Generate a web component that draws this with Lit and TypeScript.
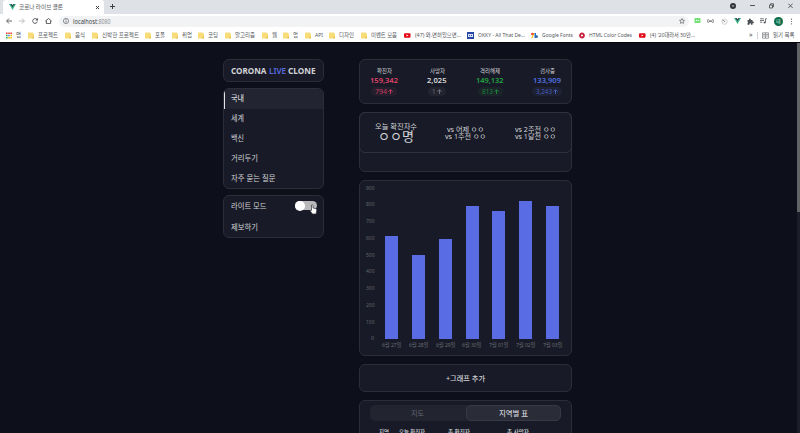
import { LitElement, html, css, svg } from "lit";
import { customElement, property } from "lit/decorators.js";
import { styleMap } from "lit/directives/style-map.js";

const vue = html`<svg width="7" height="6" viewBox="0 0 14 12"><path d="M0 0h5.400l1.600 2.700L8.600 0H14L7 12z" fill="#41b883"/><path d="M2.800 0h2.600L7 2.700 8.600 0h2.600L7 7.200z" fill="#35495e"/></svg>`;
const folder = html`<svg width="6" height="7" viewBox="0 0 6 7"><path d="M0 .5h5v1h1V6.500H0z" fill="#f9dc7a"/><path d="M4.500 4.500H6v2H4.500z" fill="#e9bd50"/></svg>`;
const youtube = html`<svg width="7" height="7" viewBox="0 0 7 7"><rect y="1.200" width="6.500" height="4.600" rx="1" fill="#e30613"/><path d="M2.500 2.400l2 1.100-2 1.100z" fill="#fff"/></svg>`;
const apps = html`<svg width="6" height="7" viewBox="0 0 6 7"><path d="M0 .5h1.600v1.600H0zM2.200 .5h1.600v1.600H2.200zM4.400 .5H6v1.600H4.400z" fill="#ea4335"/><path d="M0 2.700h1.600v1.600H0zM0 4.900h1.600v1.600H0z" fill="#34a853"/><path d="M2.200 2.700h1.600v1.600H2.200z" fill="#4285f4"/><path d="M4.400 2.700H6v1.600H4.400zM2.200 4.900h1.600v1.600H2.200zM4.400 4.900H6v1.600H4.400z" fill="#fbbc05"/></svg>`;
const okky = html`<svg width="7" height="7" viewBox="0 0 7 7"><rect width="7" height="7" fill="#2647a5"/><path d="M1 2h5v3H1z" fill="#dce3f5"/><path d="M2 3h1v1H2zM4 3h1v1H4z" fill="#2647a5"/></svg>`;
const gfonts = html`<svg width="7" height="7" viewBox="0 0 7 7"><path d="M0 1h4L1.500 6H0L2 3z" fill="#fbbc04"/><path d="M3.500 1H5v5H3.500z" fill="#1a73e8"/><circle cx="5.600" cy="4.600" r="1.400" fill="#34679a"/><circle cx="1.300" cy="2" r="1.200" fill="#ea4335"/></svg>`;
const colors = html`<svg width="6" height="7" viewBox="0 0 6 7"><circle cx="3" cy="3.500" r="2" fill="none" stroke="#c91e3a" stroke-width="1.800"/></svg>`;

const bookmarks = [
  { icon: apps, label: "앱", width: 22, text: 5 },
  { icon: folder, label: "프로젝트", width: 37, text: 20 },
  { icon: folder, label: "음식", width: 27, text: 10 },
  { icon: folder, label: "신박한 프로젝트", width: 53, text: 37 },
  { icon: folder, label: "포폴", width: 27, text: 10 },
  { icon: folder, label: "취업", width: 26, text: 10 },
  { icon: folder, label: "코딩", width: 27, text: 10 },
  { icon: folder, label: "알고리즘", width: 37, text: 20 },
  { icon: folder, label: "웹", width: 21, text: 5 },
  { icon: folder, label: "업", width: 22, text: 5 },
  { icon: folder, label: "API", width: 24, text: 8 },
  { icon: folder, label: "디자인", width: 32, text: 15 },
  { icon: folder, label: "이벤트 모음", width: 43, text: 26 },
  { icon: youtube, label: "(47) 와.면허있으면...", width: 63, text: 46 },
  { icon: okky, label: "OKKY - All That De...", width: 64, text: 47 },
  { icon: gfonts, label: "Google Fonts", width: 48, text: 31 },
  { icon: colors, label: "HTML Color Codes", width: 60, text: 43 },
  { icon: youtube, label: "(4) '20대라서 50만...", width: 60, text: 45 },
];

const stats = [
  { name: "확진자", total: "159,342", delta: "794", tone: "red" },
  { name: "사망자", total: "2,025", delta: "1", tone: "grey" },
  { name: "격리해제", total: "149,132", delta: "813", tone: "green" },
  { name: "검사중", total: "133,909", delta: "3,243", tone: "blue" },
];

const days = [
  { label: "6월 27일", value: 612 },
  { label: "6월 28일", value: 501 },
  { label: "6월 29일", value: 595 },
  { label: "6월 30일", value: 792 },
  { label: "7월 01일", value: 761 },
  { label: "7월 02일", value: 825 },
  { label: "7월 03일", value: 793 },
];

/** Single line of text set to an exact width. */
@customElement("fit-text")
class FitText extends LitElement {
  static styles = css`
    :host { display: inline-block; line-height: 0; flex: none; }
    svg { display: block; overflow: visible; }
    text { fill: currentColor; }
  `;
  @property() text = "";
  @property({ type: Number }) width = 10;
  @property({ type: Number }) size = 6;
  render() {
    const h = Math.ceil(this.size * 1.3);
    return html`<svg width=${this.width} height=${h}>
      ${svg`<text x="0" y=${h / 2 + this.size * 0.36} font-size=${this.size} textLength=${this.width} lengthAdjust="spacingAndGlyphs">${this.text}</text>`}
    </svg>`;
  }
}

@customElement("browser-chrome")
class BrowserChrome extends LitElement {
  static styles = css`
    :host { display: block; height: 43px; background: #fff; color: #55585c; }
    svg { display: block; flex: none; }
    .strip { height: 14px; background: #dee1e6; display: flex; align-items: stretch; }
    .tab { margin-left: 3px; width: 91px; padding: 0 4px 0 6px; background: #fff; border-radius: 3px 3px 0 0; display: flex; align-items: center; gap: 3px; }
    .close { margin-left: auto; }
    .plus { margin: 3px 0 0 5px; }
    .window { margin: 1.500px 7px 0 auto; display: flex; align-items: center; gap: 14px; height: 9px; }
    .bar { height: 14px; display: flex; align-items: center; padding: 0 0 0 6px; }
    .nav { display: flex; gap: 7px; width: 52px; }
    .url { width: 630px; height: 11px; border-radius: 6px; background: #f1f3f4; display: flex; align-items: center; padding: 0 4px; gap: 3.500px; box-sizing: border-box; margin-left: 1px; }
    .url .star { margin-left: auto; }
    .dim { color: #8c9094; }
    .host { display: flex; gap: .6px; color: #3c4043; }
    .ext { display: flex; align-items: center; gap: 6.300px; margin-left: 5px; }
    .avatar { width: 9px; height: 9px; border-radius: 50%; background: #0b6b4b; color: #cfe8dc; font-size: 5px; line-height: 9px; text-align: center; }
    .marks { height: 14px; display: flex; align-items: center; padding-left: 6px; }
    .mark { display: flex; align-items: center; gap: 3.500px; flex: none; }
    .tail { display: flex; align-items: center; margin-left: 50px; gap: 4px; }
    .more { font-size: 7px; line-height: 8px; }
    .rule { width: 1px; height: 7px; background: #cfd2d6; }
    .edge { height: 1px; background: #05060b; }
  `;
  render() {
    return html`
      <div class="strip">
        <div class="tab">${vue}<fit-text text="코로나 라이브 클론" width="44" size="6"></fit-text>
          <svg class="close" width="5" height="5" viewBox="0 0 5 5"><path d="M1 1l3 3M4 1L1 4" stroke="#3c4043"/></svg>
        </div>
        <svg class="plus" width="7" height="7" viewBox="0 0 7 7"><path d="M3.500 1v5M1 3.500h5" stroke="#3c4043"/></svg>
        <div class="window">
          <svg width="6" height="6" viewBox="0 0 6 6"><circle cx="3" cy="3" r="3" fill="#303338"/><path d="M1.700 2.400h2.600L3 4z" fill="#dee1e6"/></svg>
          <svg width="5" height="6" viewBox="0 0 5 6"><path d="M0 2.500h5" stroke="#555" /></svg>
          <svg width="5" height="6" viewBox="0 0 5 6"><path d="M.5 2h3v3h-3zM1.500 2V.8h3v3h-1" fill="none" stroke="#444" stroke-width=".8"/></svg>
          <svg width="5" height="6" viewBox="0 0 5 6"><path d="M.3 .6l4.400 4.400M4.700 .6L.3 5" stroke="#444" stroke-width=".8"/></svg>
        </div>
      </div>
      <div class="bar">
        <div class="nav">
          <svg width="6" height="6" viewBox="0 0 6 6"><path d="M6 3H.7M3 .5L.6 3 3 5.500" fill="none" stroke="#55585c" stroke-width=".9"/></svg>
          <svg width="6" height="6" viewBox="0 0 6 6"><path d="M0 3h5.300M3 .5L5.400 3 3 5.500" fill="none" stroke="#b4b7ba" stroke-width=".9"/></svg>
          <svg width="6" height="6" viewBox="0 0 6 6"><path d="M5 1.500A2.400 2.400 0 1 0 5.400 3.600" fill="none" stroke="#484b4f" stroke-width=".9"/><path d="M6 0v2.600H3.400z" fill="#484b4f"/></svg>
          <svg width="7" height="6" viewBox="0 0 7 6"><path d="M.3 3.200L3.500 .5l3.200 2.700M1.400 2.800v2.800h4.200V2.800" fill="none" stroke="#484b4f" stroke-width=".9"/></svg>
        </div>
        <div class="url">
          <svg width="6" height="6" viewBox="0 0 6 6"><circle cx="3" cy="3" r="2.600" fill="none" stroke="#5f6368" stroke-width=".7"/><path d="M3 2.600v2M3 1.300v.8" stroke="#5f6368" stroke-width=".8"/></svg>
          <span class="host"><fit-text text="localhost" width="24" size="6.500"></fit-text><fit-text class="dim" text=":8080" width="13.500" size="6.500"></fit-text></span>
          <svg class="star" width="6" height="6" viewBox="0 0 12 12"><path d="M6 1l1.500 3.300 3.500.4-2.600 2.400.7 3.600L6 9l-3.100 1.700.7-3.600L1 4.700l3.500-.4z" fill="none" stroke="#55585c" stroke-width="1.300"/></svg>
        </div>
        <div class="ext">
          <svg width="7" height="6" viewBox="0 0 7 6"><rect x=".5" width="6" height="5" rx=".6" fill="#76e07a"/><path d="M2 2h1v1H2zM4 2h1v1H4z" fill="#fff"/></svg>
          <svg width="7" height="6" viewBox="0 0 7 6"><path d="M1.300 1Q0 3 1.300 5M5.700 1Q7 3 5.700 5" fill="none" stroke="#55585c" stroke-width=".8"/><path d="M2 2.500h3v1.200H2z" fill="#55585c"/></svg>
          <svg width="7" height="7" viewBox="0 0 7 7"><circle cx="3.500" cy="3.700" r="2.700" fill="#f4f4f4" stroke="#c3c5c8" stroke-width=".7"/><path d="M1.500 1.800L4 3.800" stroke="#777" stroke-width=".8"/></svg>
          ${vue}
          <svg width="7" height="7" viewBox="0 0 7 7"><path d="M.5 2H2V1.300a.9.900 0 0 1 1.800 0V2h1.700v1.500h.5a.9.900 0 0 1 0 1.800h-.5V6.700H4v-.6a.7.700 0 0 0-1.500 0v.6H.5V5a.8.800 0 0 0 0-1.500z" fill="#4c4f53"/></svg>
          <svg width="7" height="6" viewBox="0 0 7 6"><path d="M0 .8h4M0 2.500h4M0 4.200h2.300M5.500 4.500V.8H7" fill="none" stroke="#55585c" stroke-width=".8"/><circle cx="4.600" cy="4.500" r="1" fill="#55585c"/></svg>
          <div class="avatar">태</div>
          <svg width="5" height="7" viewBox="0 0 5 7"><circle cx="2.500" cy="1.200" r=".6" fill="#55585c"/><circle cx="2.500" cy="3.500" r=".6" fill="#55585c"/><circle cx="2.500" cy="5.800" r=".6" fill="#55585c"/></svg>
        </div>
      </div>
      <div class="marks">
        ${bookmarks.map((b) => html`<div class="mark" style=${styleMap({ width: `${b.width}px` })}>${b.icon}<fit-text .text=${b.label} .width=${b.text} .size=${5.8}></fit-text></div>`)}
        <div class="tail">
          <span class="more">»</span><span class="rule"></span>
          <svg width="7" height="7" viewBox="0 0 7 7"><path d="M.5 .8h6v5.400h-6zM3.500 .8v5.400M1 2.400h2M1 4h2M4 2.400h2M4 4h2" fill="none" stroke="#777a7e" stroke-width=".7"/></svg>
          <fit-text text="읽기 목록" width="21.500" size="5.800"></fit-text>
        </div>
      </div>
      <div class="edge"></div>
    `;
  }
}

@customElement("app-root")
class AppRoot extends LitElement {
  static styles = css`
    :host { display: block; width: 800px; height: 433px; overflow: hidden; font-family: "Noto Sans", "Noto Sans CJK KR", sans-serif; background: #0d0f1b; color: #d2d3d7; }
    .view { display: flex; height: 390px; overflow: hidden; }
    .side { width: 101px; margin: 16px 35px 0 223px; display: flex; flex-direction: column; gap: 6px; flex: none; }
    .main { width: 213px; margin-top: 16px; display: flex; flex-direction: column; gap: 8px; flex: none; }
    .card { box-sizing: border-box; border: 1px solid #2b2d39; border-radius: 6px; background: #181b27; flex: none; }
    .logo { height: 23px; display: flex; align-items: center; justify-content: center; gap: 2.300px; font-weight: 700; }
    .live { display: flex; color: #5b6ce0; font-weight: 600; }
    .menu { height: 101px; overflow: hidden; }
    .item { height: 20px; display: flex; align-items: center; padding: 0 0 1.400px 7px; box-sizing: border-box; }
    .item.on { background: #222431; border-left: 1px solid #e4e4e8; padding-left: 6px; font-weight: 500; }
    .tools { height: 43px; }
    .tools .item { height: 21px; }
    .toggle { position: relative; width: 22px; height: 9px; margin-left: 28.500px; border-radius: 5px; background: #b9b9bb; }
    .knob { width: 10px; height: 10px; margin-top: -.5px; border-radius: 50%; background: #fff; }
    .hand { position: absolute; left: 14px; top: 3px; }
    .stats { height: 45px; display: grid; grid-template-columns: 48px 58px 48px 1fr; padding-top: 6.500px; }
    .stat { display: flex; flex-direction: column; align-items: center; }
    .stat:last-child { padding-left: 9px; }
    .num { display: flex; font-weight: 600; }
    .pill { height: 9px; margin-top: 1px; padding: 0 4px; border-radius: 5px; display: flex; align-items: center; gap: 1px; }
    .red { color: #e04368; } .grey { color: #d9dadd; } .green { color: #22a643; } .blue { color: #5170e0; }
    .pill.red { color: #c63c60; background: #251e2c; } .pill.grey { color: #6d707b; background: #222530; } .pill.green { color: #16873a; background: #1a2429; } .pill.blue { color: #445bbd; background: #1e2234; }
    .today { height: 60px; }
    .today-in { box-sizing: border-box; margin: -1px -1px 0; height: 41px; border: 1px solid #2f313c; border-radius: 6px; display: grid; grid-template-columns: 71px 69px 71px; align-items: center; }
    .col { display: flex; flex-direction: column; align-items: center; }
    .lead fit-text:first-child { margin-bottom: -3px; }
    .vs fit-text { margin: -1.400px 0; }
    .chart { height: 176px; display: grid; grid-template-columns: 14px 1fr; grid-template-rows: 151px 12px; padding: 7px 4px 0 0; }
    .axis { display: flex; flex-direction: column; justify-content: space-between; align-items: flex-end; margin: -3.500px 0; color: #62646d; }
    .bars { display: grid; grid-template-columns: repeat(7, 26.800px); justify-content: start; align-items: end; margin-left: 4.400px; }
    .bar { width: 13px; justify-self: center; background: #596ce3; }
    .labels { grid-column: 2; display: grid; grid-template-columns: repeat(7, 26.800px); justify-items: center; align-items: center; margin: 1px 0 0 4.400px; color: #6a6c75; }
    .add { height: 28px; display: flex; align-items: center; justify-content: center; font-weight: 500; }
    .region { height: 60px; padding: 4px 10px 0; }
    .seg { height: 16px; border-radius: 5px; background: #222430; display: grid; grid-template-columns: 1fr 1fr; color: #666973; }
    .seg div { display: flex; align-items: center; justify-content: center; box-sizing: border-box; }
    .seg .sel { background: #2a2c38; border: 1px solid #373944; border-radius: 5px; color: #d2d3d7; font-weight: 500; }
    .head { display: flex; margin: 7px 0 0 9px; font-weight: 500; }
    .head div { line-height: 0; }
    .scroll { width: 3.500px; margin-left: auto; background: #1b1d29; }
    .thumb { height: 169px; background: #616266; }
  `;
  render() {
    const t = (text: string, width: number, size: number) =>
      html`<fit-text .text=${text} .width=${width} .size=${size}></fit-text>`;
    const menu: [string, number][] = [["국내", 13], ["세계", 13], ["백신", 13], ["거리두기", 27], ["자주 묻는 질문", 44.5]];
    const nameWidths = [15, 15, 20, 15];
    const totalWidths = [28, 19.5, 27.5, 28];
    const deltaWidths = [12, 3.500, 11, 16];
    return html`
      <browser-chrome></browser-chrome>
      <div class="view">
        <div class="side">
          <div class="card logo">${t("CORONA", 35.5, 8.4)}<span class="live">${t("LIVE", 17, 8.4)}</span>${t("CLONE", 27.5, 8.4)}</div>
          <div class="card menu">${menu.map(([label, w], i) => html`<div class="item ${i === 0 ? "on" : ""}">${t(label, w, 7.6)}</div>`)}</div>
          <div class="card tools">
            <div class="item">${t("라이트 모드", 35.5, 7.6)}
              <div class="toggle"><div class="knob"></div>
                <svg class="hand" width="9" height="11" viewBox="0 0 9 11"><path d="M2.500 1Q3.500 .4 4 1.400V4l3 .7Q8 5 7.700 6.500L7 10H3.500L1 6.800q.3-1 1.500-.4z" fill="#fff" stroke="#33343b" stroke-width=".7"/></svg>
              </div>
            </div>
            <div class="item">${t("제보하기", 27, 7.6)}</div>
          </div>
        </div>
        <div class="main">
          <div class="card stats">
            ${stats.map((s, i) => html`<div class="stat">${t(s.name, nameWidths[i], 5.8)}
              <span class="num ${s.tone}">${t(s.total, totalWidths[i], 7.8)}</span>
              <div class="pill ${s.tone}">${t(s.delta, deltaWidths[i], 6.8)}<svg width="5" height="5" viewBox="0 0 5 5"><path d="M2.500 5V.8M.5 2.700l2-2 2 2" fill="none" stroke="currentColor" stroke-width="1"/></svg></div>
            </div>`)}
          </div>
          <div class="card today">
            <div class="today-in">
              <div class="col lead">${t("오늘 확진자수", 42, 7.4)}${t("ㅇㅇ명", 36, 13)}</div>
              <div class="col vs">${t("vs 어제 ㅇㅇ", 37, 7.2)}${t("vs 1주전 ㅇㅇ", 41, 7.2)}</div>
              <div class="col vs">${t("vs 2주전 ㅇㅇ", 41, 7.2)}${t("vs 1달전 ㅇㅇ", 41, 7.2)}</div>
            </div>
          </div>
          <div class="card chart">
            <div class="axis">${[900, 800, 700, 600, 500, 400, 300, 200, 100, 0].map((n) => t(String(n), n ? 8.5 : 3, 5.3))}</div>
            <div class="bars">${days.map((d) => html`<div class="bar" style=${styleMap({ height: `${(d.value / 900) * 151}px` })}></div>`)}</div>
            <div class="labels">${days.map((d) => t(d.label, 19.5, 5.3))}</div>
          </div>
          <div class="card add">${t("+그래프 추가", 39, 7.4)}</div>
          <div class="card region">
            <div class="seg"><div>${t("지도", 13, 7.4)}</div><div class="sel">${t("지역별 표", 29, 7.4)}</div></div>
            <div class="head">
              ${[["지역", 10, 20], ["오늘 확진자", 26, 49], ["총 확진자", 22, 59], ["총 사망자", 22, 40]].map(([s, w, cell]) => html`<div style=${styleMap({ width: `${cell}px` })}>${t(s as string, w as number, 5.6)}</div>`)}
            </div>
          </div>
        </div>
        <div class="scroll"><div class="thumb"></div></div>
      </div>
    `;
  }
}
